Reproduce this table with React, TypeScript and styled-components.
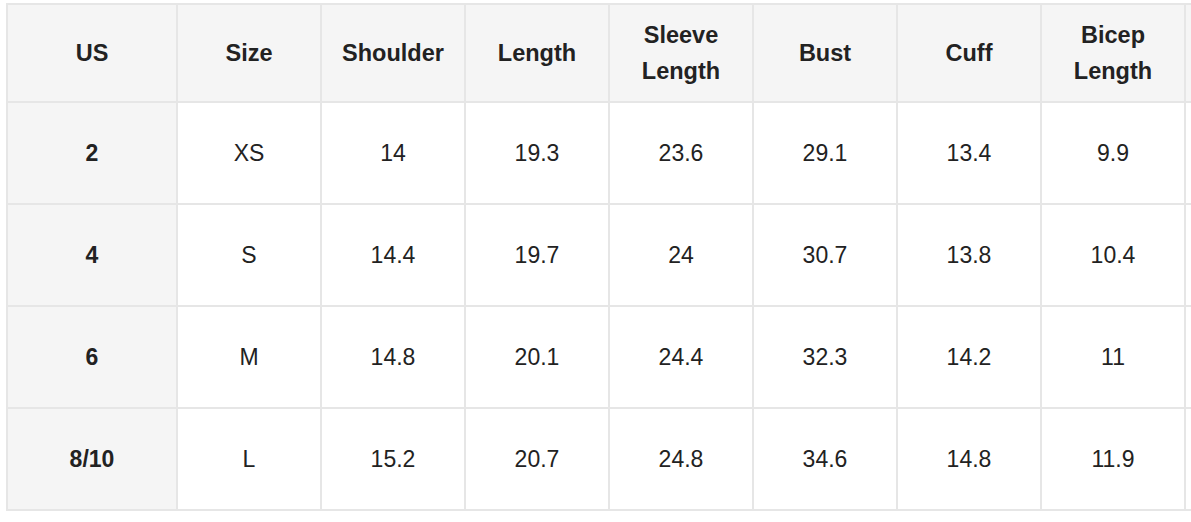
import React from "react";
import styled, { createGlobalStyle } from "styled-components";

const GlobalStyle = createGlobalStyle`
  html, body {
    margin: 0;
    padding: 0;
    background: #ffffff;
    overflow: hidden;
  }
`;

const Scroller = styled.div`
  width: 1191px;
  height: 522px;
  overflow: hidden;
  padding: 3px 0 0 6px;
  box-sizing: border-box;
`;

const Table = styled.table`
  border-collapse: collapse;
  table-layout: fixed;
  width: ${170 + 144 * 8}px;
  font-family: "Liberation Sans", Arial, Helvetica, sans-serif;
  font-size: 23px;
  color: #222222;
`;

const HeadCell = styled.th`
  height: 96px;
  padding: 0 10px;
  background-color: #f5f5f5;
  border: 2px solid #e6e6e6;
  font-size: 23.5px;
  font-weight: 700;
  line-height: 36px;
  text-align: center;
  vertical-align: middle;
`;

const Cell = styled.td<{ $key?: boolean }>`
  height: 100px;
  padding: 0 10px;
  border: 2px solid #e6e6e6;
  text-align: center;
  vertical-align: middle;
  background-color: ${(p) => (p.$key ? "#f5f5f5" : "#ffffff")};
  font-weight: ${(p) => (p.$key ? 700 : 400)};
`;

// последняя колонка обрезана краем окна — текст не виден
const columns = [
  "US",
  "Size",
  "Shoulder",
  "Length",
  "Sleeve Length",
  "Bust",
  "Cuff",
  "Bicep Length",
  "",
];

const rows: string[][] = [
  ["2", "XS", "14", "19.3", "23.6", "29.1", "13.4", "9.9", ""],
  ["4", "S", "14.4", "19.7", "24", "30.7", "13.8", "10.4", ""],
  ["6", "M", "14.8", "20.1", "24.4", "32.3", "14.2", "11", ""],
  ["8/10", "L", "15.2", "20.7", "24.8", "34.6", "14.8", "11.9", ""],
];

export default function App() {
  return (
    <>
      <GlobalStyle />
      <Scroller>
        <Table>
          <colgroup>
            {columns.map((_, i) => (
              <col key={i} style={{ width: i === 0 ? 170 : 144 }} />
            ))}
          </colgroup>
          <thead>
            <tr>
              {columns.map((c, i) => (
                <HeadCell key={i}>{c}</HeadCell>
              ))}
            </tr>
          </thead>
          <tbody>
            {rows.map((r) => (
              <tr key={r[0]}>
                {r.map((v, i) => (
                  <Cell key={i} $key={i === 0}>
                    {v}
                  </Cell>
                ))}
              </tr>
            ))}
          </tbody>
        </Table>
      </Scroller>
    </>
  );
}
